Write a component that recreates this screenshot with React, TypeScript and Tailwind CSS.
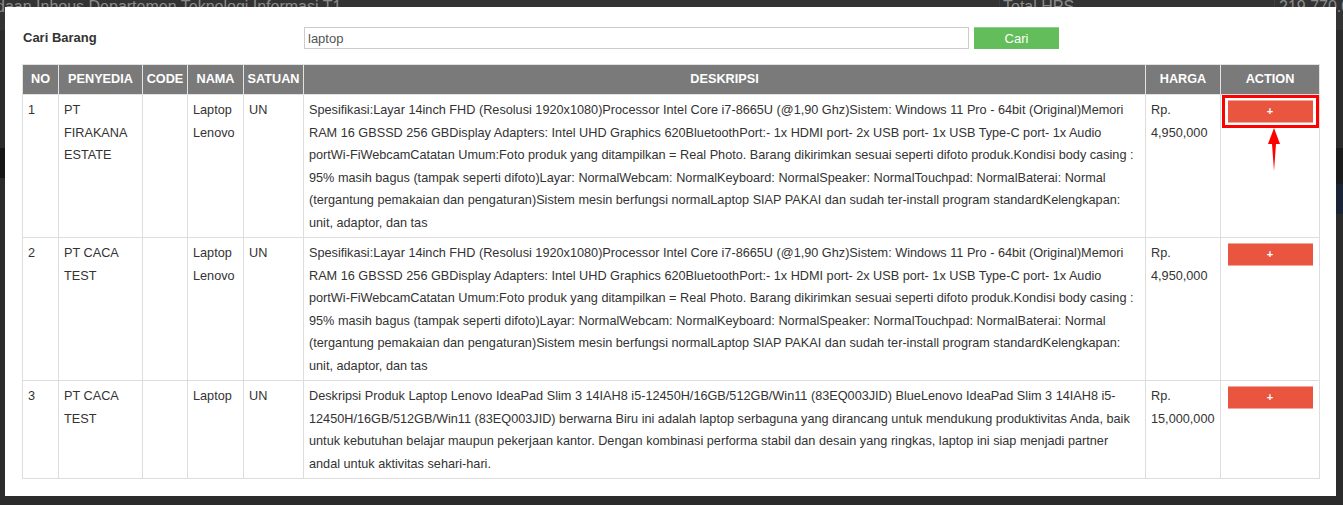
import React from "react";

const row1Desc = [
  "Spesifikasi:Layar 14inch FHD (Resolusi 1920x1080)Processor Intel Core i7-8665U (@1,90 Ghz)Sistem: Windows 11 Pro - 64bit (Original)Memori",
  "RAM 16 GBSSD 256 GBDisplay Adapters: Intel UHD Graphics 620BluetoothPort:- 1x HDMI port- 2x USB port- 1x USB Type-C port- 1x Audio",
  "portWi-FiWebcamCatatan Umum:Foto produk yang ditampilkan = Real Photo. Barang dikirimkan sesuai seperti difoto produk.Kondisi body casing :",
  "95% masih bagus (tampak seperti difoto)Layar: NormalWebcam: NormalKeyboard: NormalSpeaker: NormalTouchpad: NormalBaterai: Normal",
  "(tergantung pemakaian dan pengaturan)Sistem mesin berfungsi normalLaptop SIAP PAKAI dan sudah ter-install program standardKelengkapan:",
  "unit, adaptor, dan tas",
];

const row3Desc = [
  "Deskripsi Produk Laptop Lenovo IdeaPad Slim 3 14IAH8 i5-12450H/16GB/512GB/Win11 (83EQ003JID) BlueLenovo IdeaPad Slim 3 14IAH8 i5-",
  "12450H/16GB/512GB/Win11 (83EQ003JID) berwarna Biru ini adalah laptop serbaguna yang dirancang untuk mendukung produktivitas Anda, baik",
  "untuk kebutuhan belajar maupun pekerjaan kantor. Dengan kombinasi performa stabil dan desain yang ringkas, laptop ini siap menjadi partner",
  "andal untuk aktivitas sehari-hari.",
];

const rows = [
  { no: "1", penyedia: "PT FIRAKANA ESTATE", nama: "Laptop Lenovo", satuan: "UN", desc: row1Desc, harga: "Rp. 4,950,000", marked: true },
  { no: "2", penyedia: "PT CACA TEST", nama: "Laptop Lenovo", satuan: "UN", desc: row1Desc, harga: "Rp. 4,950,000", marked: false },
  { no: "3", penyedia: "PT CACA TEST", nama: "Laptop", satuan: "UN", desc: row3Desc, harga: "Rp. 15,000,000", marked: false },
];

const td = "border border-[#dddddd] px-[5px] pt-[4px] pb-[3px] align-top text-[12.7px] leading-[22.5px] text-[#333333]";
const th = "border border-[#e2e2e2] h-[30px] p-0 text-center align-middle text-[12.7px] font-bold text-white";

function AddButton({ marked }: { marked: boolean }) {
  return (
    <div className="relative mt-[1px] mx-auto w-[85px]">
      <button className="flex items-center justify-center w-[85px] h-[23px] bg-[#e9553f] border-y border-[#f3a597] text-white text-[11px] font-bold leading-none">
        +
      </button>
      {marked && (
        <>
          <div className="absolute -inset-x-[6px] -inset-y-[5px] border-[3px] border-[#ff0000]" />
          <svg className="absolute left-[39px] top-[28px]" width="14" height="44" viewBox="0 0 14 44">
            <polygon points="7,0 13,16 9,16 7,43 5,16 1,16" fill="#ff0000" />
          </svg>
        </>
      )}
    </div>
  );
}

export default function App() {
  return (
    <div
      className="relative w-[1343px] h-[505px] overflow-hidden bg-[#2b2b2b]"
      style={{ fontFamily: '"Liberation Sans", Arial, sans-serif' }}
    >
      {/* page behind the overlay */}
      <div className="flex flex-col h-full">
        <div className="flex h-[30px] bg-[#333333] text-[16px] leading-[14px] text-[#8c8c8c] whitespace-nowrap overflow-hidden">
          <div className="shrink-0 w-[1004px] -ml-[4px] border-r border-[#3f3f3f]">daan Inhous Departemen Teknologi Informasi T1</div>
          <div className="shrink-0 w-[275px] pl-[3px] border-r border-[#3f3f3f]">Total HPS</div>
          <div className="shrink-0 pl-[4px]">219.770.01</div>
        </div>
        <div className="flex justify-between flex-1 pt-[118px]">
          <div className="w-[5px] h-[30px] bg-[#161616]" />
          <div className="flex flex-col w-[7px]">
            <div className="h-[36px] bg-[#1b1b1b]" />
            <div className="h-[30px] bg-[#1a2436]" />
          </div>
        </div>
      </div>

      {/* modal */}
      <div className="absolute left-[5px] top-[7px] w-[1331px] h-[489px] bg-white px-[17px] pt-[20px]">
        <div className="flex items-center h-[22px]">
          <div className="w-[282px] pl-[1px] text-[13px] font-bold text-[#333333]">Cari Barang</div>
          <input
            readOnly
            value="laptop"
            className="w-[665px] h-[22px] border border-[#cccccc] px-[3px] text-[13px] text-[#555555] outline-none"
            style={{ fontFamily: '"Liberation Sans", Arial, sans-serif' }}
          />
          <button className="ml-[5px] w-[85px] h-[22px] bg-[#62bd5a] text-white text-[13px] border-t border-[#8fd088]">
            Cari
          </button>
        </div>

        <table className="mt-[15px] w-[1297px] table-fixed border-collapse">
          <colgroup>
            <col className="w-[36px]" />
            <col className="w-[84px]" />
            <col className="w-[45px]" />
            <col className="w-[56px]" />
            <col className="w-[60px]" />
            <col className="w-[842px]" />
            <col className="w-[75px]" />
            <col className="w-[99px]" />
          </colgroup>
          <thead>
            <tr className="bg-[#7a7a7a]">
              <th className={th}>NO</th>
              <th className={th}>PENYEDIA</th>
              <th className={th}>CODE</th>
              <th className={th}>NAMA</th>
              <th className={th}>SATUAN</th>
              <th className={th}>DESKRIPSI</th>
              <th className={th}>HARGA</th>
              <th className={th}>ACTION</th>
            </tr>
          </thead>
          <tbody>
            {rows.map((r) => (
              <tr key={r.no}>
                <td className={td}>{r.no}</td>
                <td className={td}>{r.penyedia}</td>
                <td className={td}></td>
                <td className={td}>{r.nama}</td>
                <td className={td}>{r.satuan}</td>
                <td className={td}>
                  {r.desc.map((l, i) => (
                    <div key={i} className="whitespace-nowrap">{l}</div>
                  ))}
                </td>
                <td className={td}>{r.harga}</td>
                <td className={td}>
                  <AddButton marked={r.marked} />
                </td>
              </tr>
            ))}
          </tbody>
        </table>
      </div>
    </div>
  );
}
